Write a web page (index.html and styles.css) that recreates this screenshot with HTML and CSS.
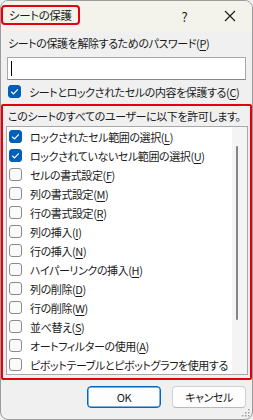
FILE: index.html
```html
<!DOCTYPE html>
<html lang="ja">
<head>
<meta charset="utf-8">
<link rel="stylesheet" href="styles.css">
</head>
<body>
<div class="dialog">
  <div class="titlebar">
    <div class="title">シートの保護</div>
    <div class="spacer"></div>
    <div class="cap">?</div>
    <div class="cap"><svg width="12" height="12" viewBox="0 0 12 12"><path d="M1 1 L11 11 M11 1 L1 11" stroke="#1a1a1a" stroke-width="1.1" fill="none"/></svg></div>
  </div>
  <div class="content">
    <div class="label">シートの保護を解除するためのパスワード(<u>P</u>)</div>
    <div class="input"><span class="caret"></span></div>
    <div class="row top-row"><span class="box on"><svg width="13" height="13" viewBox="0 0 13 13"><path d="M3.2 6.8 L5.5 9 L9.8 4.4" stroke="#fff" stroke-width="1.2" fill="none"/></svg></span><span>シートとロックされたセルの内容を保護する(<u>C</u>)</span></div>
    <div class="group">
      <div class="label glabel">このシートのすべてのユーザーに以下を許可します。</div>
      <div class="list">
        <div class="items">
          <div class="row"><span class="box on"><svg width="13" height="13" viewBox="0 0 13 13"><path d="M3.2 6.8 L5.5 9 L9.8 4.4" stroke="#fff" stroke-width="1.2" fill="none"/></svg></span><span>ロックされたセル範囲の選択(<u>L</u>)</span></div>
          <div class="row"><span class="box on"><svg width="13" height="13" viewBox="0 0 13 13"><path d="M3.2 6.8 L5.5 9 L9.8 4.4" stroke="#fff" stroke-width="1.2" fill="none"/></svg></span><span>ロックされていないセル範囲の選択(<u>U</u>)</span></div>
          <div class="row"><span class="box"></span><span>セルの書式設定(<u>F</u>)</span></div>
          <div class="row"><span class="box"></span><span>列の書式設定(<u>M</u>)</span></div>
          <div class="row"><span class="box"></span><span>行の書式設定(<u>R</u>)</span></div>
          <div class="row"><span class="box"></span><span>列の挿入(<u>I</u>)</span></div>
          <div class="row"><span class="box"></span><span>行の挿入(<u>N</u>)</span></div>
          <div class="row"><span class="box"></span><span>ハイパーリンクの挿入(<u>H</u>)</span></div>
          <div class="row"><span class="box"></span><span>列の削除(<u>D</u>)</span></div>
          <div class="row"><span class="box"></span><span>行の削除(<u>W</u>)</span></div>
          <div class="row"><span class="box"></span><span>並べ替え(<u>S</u>)</span></div>
          <div class="row"><span class="box"></span><span>オートフィルターの使用(<u>A</u>)</span></div>
          <div class="row"><span class="box"></span><span>ピボットテーブルとピボットグラフを使用する</span></div>
        </div>
        <div class="scroll"><div class="thumb"></div></div>
      </div>
    </div>
    <div class="buttons">
      <div class="btn default">OK</div>
      <div class="btn">キャンセル</div>
    </div>
  </div>
  <svg class="grip" width="8" height="8" viewBox="0 0 8 8"><g fill="#a0a0a0"><rect x="6" y="0" width="1.5" height="1.5"/><rect x="3" y="3" width="1.5" height="1.5"/><rect x="6" y="3" width="1.5" height="1.5"/><rect x="0" y="6" width="1.5" height="1.5"/><rect x="3" y="6" width="1.5" height="1.5"/><rect x="6" y="6" width="1.5" height="1.5"/></g></svg>
</div>
</body>
</html>
```
FILE: styles.css
```css
* { box-sizing: border-box; }
html, body { margin: 0; padding: 0; background: #f0f0f0; }
body {
  font-family: "Noto Sans CJK JP", "Noto Sans", sans-serif;
  font-size: 11px;
  letter-spacing: -0.4px;
  color: #1a1a1a;
  font-feature-settings: "palt";
}
u { text-decoration-thickness: 1px; text-underline-offset: 2px; }
.dialog {
  position: relative;
  width: 253px;
  height: 420px;
  border: 1px solid #9c9c9c;
  border-radius: 8px;
  background: #f0f0f0;
  overflow: hidden;
}
.titlebar {
  height: 30px;
  display: flex;
  align-items: center;
  background: #f3f3eb;
}
.title {
  margin-left: 0;
  margin-top: -3px;
  width: 79px;
  height: 20px;
  border: 2px solid #e3000f;
  border-radius: 4px;
  padding-left: 6px;
  line-height: 16px;
  font-size: 11.5px;
}
.spacer { flex: 1; }
.cap {
  width: 45px;
  height: 30px;
  display: flex;
  align-items: center;
  justify-content: center;
  font-size: 13px;
}
.content { padding: 0 6px; }
.label { line-height: 16px; margin-top: 4px; padding-left: 1px; white-space: nowrap; }
.input {
  margin-top: 6px;
  height: 23px;
  border: 1px solid #a8a8a8;
  border-bottom-color: #868686;
  background: #fff;
  padding: 3px 3px;
}
.caret { display: block; width: 1px; height: 15px; background: #000; }
.row {
  display: flex;
  align-items: center;
  height: 19px;
  white-space: nowrap;
}
.top-row { margin-top: 3px; height: 17px; }
.box {
  flex: none;
  width: 13px;
  height: 13px;
  border: 1px solid #8a8a8a;
  border-radius: 3px;
  background: #fafafa;
  margin-right: 8px;
  display: flex;
}
.box.on { background: #005fb8; border-color: #005fb8; }
.box.on svg { margin: -1px; }
.top-row .box { margin-left: 1px; }
.group {
  margin: 4px -6px 0;
  border: 2px solid #e3000f;
  border-radius: 2px;
  padding: 0 2px 3px 3px;
}
.glabel { margin-top: 2px; padding-left: 2px; }
.list {
  margin-top: 2px;
  height: 249px;
  border: 1px solid #a8a8a8;
  background: #fff;
  display: flex;
}
.items { flex: 1; padding: 0 0 0 2px; overflow: hidden; }
.scroll {
  flex: none;
  width: 15px;
  background: #f4f4f4;
  padding: 19px 0 0 4px;
}
.thumb {
  width: 2px;
  height: 174px;
  border-radius: 1px;
  background: #858585;
}
.buttons {
  display: flex;
  justify-content: flex-end;
  gap: 11px;
  margin-top: 6px;
  padding-right: 0;
}
.btn {
  width: 74px;
  height: 22px;
  border: 1px solid #d0d0d0;
  border-bottom-color: #b8b8b8;
  border-radius: 4px;
  background: #fdfdfd;
  display: flex;
  align-items: center;
  justify-content: center;
}
.btn.default { border: 1px solid #0067c0; box-shadow: inset 0 0 0 0.5px #0067c0; }
.grip { position: absolute; right: 2px; bottom: 2px; }
```
